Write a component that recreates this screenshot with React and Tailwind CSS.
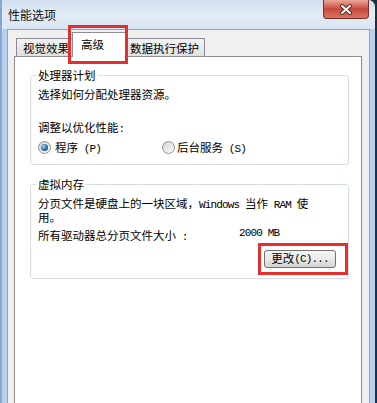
import React from "react";

const cjk = "font-['Noto_Sans_CJK_SC','Liberation_Sans',sans-serif]";
const mono = "font-['Liberation_Mono','Noto_Sans_CJK_SC',monospace] text-[11px] tracking-[-0.85px] leading-none";

// half-width latin, SimSun style
const L = ({ children }) => <span className={mono}>{children}</span>;

const Radio = ({ checked }) => (
  <span className="w-[13px] h-[13px] shrink-0 rounded-full border border-[#8e8f8f] bg-gradient-to-br from-[#d4d4d4] to-[#fbfbfb] flex items-center justify-center">
    {checked && (
      <span className="w-[7px] h-[7px] rounded-full bg-[radial-gradient(circle_at_35%_35%,#9bd6f2,#2a6d9c_55%,#0e3556)]" />
    )}
  </span>
);

const Tab = ({ children, className = "" }) => (
  <div
    className={`h-[18px] flex items-center border border-b-0 border-[#898c95] bg-gradient-to-b from-[#f3f3f3] to-[#e1e1e1] text-[11.5px] leading-[14px] ${className}`}
  >
    {children}
  </div>
);

const App = () => (
  <div className={`w-[377px] h-[403px] overflow-hidden bg-[#22303f] text-black ${cjk}`}>
    <div className="w-[375px] h-full flex flex-col rounded-tr-[7px] border-l-2 border-[#86a7cf] bg-[#b8d1ee] overflow-hidden">
      {/* Title bar */}
      <div className="h-[29px] shrink-0 flex justify-between items-start pl-[6px] pr-[6px] bg-gradient-to-b from-[#cfdeee] via-[#e3ecf6] to-[#d8e5f3]">
        <span className="mt-[7px] text-[12px] leading-[16px] text-[#111]">性能选项</span>
        <div className="w-[46px] h-[19px] rounded-b-[4px] border border-t-0 border-[#7d2f27] bg-gradient-to-b from-[#e9a797] via-[#c9473b] to-[#d77563] flex items-center justify-center">
          <svg width="14" height="11" viewBox="0 0 14 11">
            <path d="M3 2 L11 9 M11 2 L3 9" stroke="#5a2019" strokeWidth="4" strokeLinecap="round" />
            <path d="M3 2 L11 9 M11 2 L3 9" stroke="#ffffff" strokeWidth="2.2" strokeLinecap="round" />
          </svg>
        </div>
      </div>

      {/* Client area */}
      <div className="flex-1 flex px-[5px]">
        <div className="flex-1 flex flex-col border-l border-t border-r border-[#96a6ba] bg-[#f0f0f0] pl-[6px] pr-[7px] pt-[2px]">
          {/* Tabs */}
          <div className="h-[24px] shrink-0 flex items-end pl-[2px]">
            <Tab className="w-[58px] pl-[6px]">视觉效果</Tab>
            <div className="relative z-10 -ml-[2px] -mb-[1px] w-[55px] h-[25px] border border-b-0 border-[#898c95] bg-white pl-[8px] pt-[4px] text-[11.5px] leading-[14px]">
              高级
              <div className="absolute -left-[5px] -top-[8px] w-[60px] h-[39px] border-[3px] border-[#e3302f]" />
            </div>
            <Tab className="-ml-[2px] w-[80px] pl-[4px]">数据执行保护</Tab>
          </div>

          {/* Panel */}
          <div className="flex-1 border-l border-t border-r border-[#898c95] bg-white pl-[15px] pr-[12px]">
            <fieldset className="mt-[11px] border border-[#d5dfe5] rounded-[3px] px-[7px] pt-[5px] pb-[10px] text-[11.5px]">
              <legend className="px-[2px] -ml-[2px] leading-[14px]">处理器计划</legend>
              <p className="leading-[14px]">选择如何分配处理器资源。</p>
              <p className="mt-[19px] leading-[14px]">
                调整以优化性能<L>:</L>
              </p>
              <div className="mt-[5px] h-[14px] flex items-center leading-[14px]">
                <div className="w-[124px] flex items-center gap-[4px]">
                  <Radio checked />
                  <span>
                    程序<L> (P)</L>
                  </span>
                </div>
                <div className="flex items-center gap-[2px]">
                  <Radio />
                  <span>
                    后台服务<L> (S)</L>
                  </span>
                </div>
              </div>
            </fieldset>

            <fieldset className="mt-[12px] border border-[#d5dfe5] rounded-[3px] pl-[7px] pr-[12px] pt-[6px] pb-[10px] text-[11.5px]">
              <legend className="px-[2px] -ml-[2px] leading-[14px]">虚拟内存</legend>
              <p className="leading-[12px]">分页文件是硬盘上的一块区域，<L>Windows </L>当作<L> RAM </L>使</p>
              <p className="leading-[12px]">用。</p>
              <div className="mt-[5px] flex leading-[14px]">
                <span className="w-[201px]">
                  所有驱动器总分页文件大小<L>&nbsp;:</L>
                </span>
                <L>2000 MB</L>
              </div>
              <div className="mt-[7px] flex justify-end">
                <div className="relative">
                  <button className="w-[72px] h-[18px] rounded-[3px] border border-[#707070] bg-gradient-to-b from-[#f4f4f4] via-[#eaeaea] to-[#d4d4d4] flex items-center justify-center text-[11.5px] leading-none">
                    更改<L> (C)...</L>
                  </button>
                  <div className="absolute -left-[6px] -top-[7px] w-[90px] h-[32px] border-[3px] border-[#e3302f]" />
                </div>
              </div>
            </fieldset>
          </div>
        </div>
      </div>
    </div>
  </div>
);

export default App;
